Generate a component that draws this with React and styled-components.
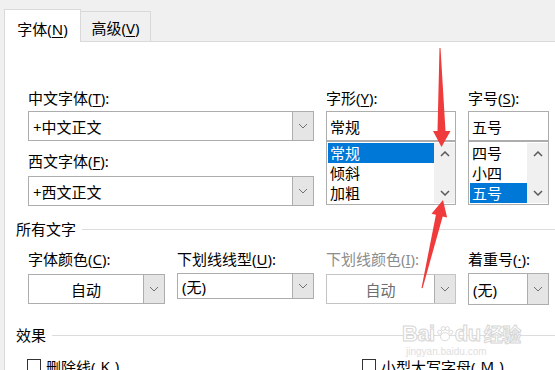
import React from "react";
import styled, { createGlobalStyle } from "styled-components";

const GlobalStyle = createGlobalStyle`
  html, body {
    margin: 0;
    padding: 0;
    background: #f0f0f0;
    overflow: hidden;
  }
  body {
    font-family: "Noto Sans", "Noto Sans CJK SC", sans-serif;
    font-size: 15px;
    color: #000;
  }
  u {
    text-underline-offset: 2px;
  }
`;

function Chevron({ up, thick }) {
  return (
    <svg width="10" height="6" viewBox="0 0 10 6">
      <polyline
        points={up ? "1,5 5,1 9,5" : "1,1 5,5 9,1"}
        fill="none"
        stroke={thick ? "#5a5a5a" : "#707070"}
        strokeWidth={thick ? 1.5 : 1}
      />
    </svg>
  );
}

function Combo({ value, center, disabled, height = 30, offset = 0 }) {
  return (
    <ComboBox $height={height} $offset={offset} $disabled={disabled}>
      <ComboValue $center={center} $disabled={disabled}>
        {value}
      </ComboValue>
      <DropButton>
        <Chevron />
      </DropButton>
    </ComboBox>
  );
}

function ListBox({ items, selected }) {
  return (
    <List>
      <Items>
        {items.map((it) => (
          <Item key={it} $selected={it === selected}>
            {it}
          </Item>
        ))}
      </Items>
      <ScrollBar>
        <ScrollButton>
          <Chevron up thick />
        </ScrollButton>
        <ScrollButton>
          <Chevron thick />
        </ScrollButton>
      </ScrollBar>
    </List>
  );
}

function Arrows() {
  return (
    <ArrowLayer width="555" height="370" viewBox="0 0 555 370">
      <polygon
        fill="#ef3b3b"
        points="439.5,48 440.5,48 445.5,131 450.5,131 441.5,147 433,131 437.5,131"
      />
      <polygon
        fill="#ef3b3b"
        points="421.5,288 422.6,288.2 442.7,216.4 447.1,217.4 443,200 431.5,213.7 435.9,214.8"
      />
    </ArrowLayer>
  );
}

export default function App() {
  return (
    <Page>
      <GlobalStyle />
      <TabBar>
        <Tab $active>
          字体(<u>N</u>)
        </Tab>
        <Tab>
          高级(<u>V</u>)
        </Tab>
      </TabBar>
      <Pane>
        <FontGrid>
          <Column $span={2}>
            <Label>
              中文字体(<u>T</u>):
            </Label>
            <Combo value="+中文正文" />
            <Label $gap>
              西文字体(<u>F</u>):
            </Label>
            <Combo value="+西文正文" />
          </Column>
          <Column>
            <Label>
              字形(<u>Y</u>):
            </Label>
            <TextBox>常规</TextBox>
            <ListBox items={["常规", "倾斜", "加粗"]} selected="常规" />
          </Column>
          <Column>
            <Label>
              字号(<u>S</u>):
            </Label>
            <TextBox>五号</TextBox>
            <ListBox items={["四号", "小四", "五号"]} selected="五号" />
          </Column>
        </FontGrid>

        <SectionHead $top={13}>
          <span>所有文字</span>
          <Rule />
        </SectionHead>

        <ColorGrid>
          <Column>
            <Label $tight>
              字体颜色(<u>C</u>):
            </Label>
            <Combo value="自动" center offset={1} />
          </Column>
          <Column>
            <Label $tight>
              下划线线型(<u>U</u>):
            </Label>
            <Combo value="(无)" height={26} />
          </Column>
          <Column>
            <Label $tight $disabled>
              下划线颜色(<u>I</u>):
            </Label>
            <Combo value="自动" center disabled offset={1} />
          </Column>
          <Column>
            <Label $tight>
              着重号(<u>·</u>):
            </Label>
            <Combo value="(无)" height={32} />
          </Column>
        </ColorGrid>

        <SectionHead $top={20}>
          <span>效果</span>
          <Rule />
        </SectionHead>

        <CheckRow>
          <Check>
            <Box />
            删除线(<u>K</u>)
          </Check>
          <Check>
            <Box />
            小型大写字母(<u>M</u>)
          </Check>
        </CheckRow>

        <Watermark>
          <Logo>
            Bai
            <Paw viewBox="0 0 20 20" width="18" height="18">
              <ellipse cx="10" cy="13" rx="5" ry="4.5" />
              <circle cx="4" cy="8" r="2.2" />
              <circle cx="8" cy="4" r="2.2" />
              <circle cx="12.5" cy="4" r="2.2" />
              <circle cx="16.5" cy="8" r="2.2" />
            </Paw>
            du
            <LogoCn>经验</LogoCn>
          </Logo>
          <Site>jingyan.baidu.com</Site>
        </Watermark>
      </Pane>
      <Arrows />
    </Page>
  );
}

const Page = styled.div`
  position: relative;
  width: 555px;
  height: 370px;
  box-sizing: border-box;
  padding: 9px 0 0 4px;
  display: flex;
  flex-direction: column;
  overflow: hidden;
`;

const TabBar = styled.div`
  display: flex;
  align-items: flex-end;
  height: 32px;
`;

const Tab = styled.div`
  box-sizing: border-box;
  width: ${(p) => (p.$active ? "77px" : "70px")};
  height: ${(p) => (p.$active ? "33px" : "30px")};
  margin-bottom: ${(p) => (p.$active ? "-1px" : "0")};
  background: ${(p) => (p.$active ? "#fff" : "#f0f0f0")};
  border: 1px solid #d9d9d9;
  border-bottom: none;
  border-left: ${(p) => (p.$active ? "1px solid #d9d9d9" : "none")};
  position: relative;
  z-index: 1;
  display: flex;
  align-items: center;
  justify-content: center;
  padding-top: ${(p) => (p.$active ? "5px" : "2px")};
  line-height: 20px;
`;

const Pane = styled.div`
  position: relative;
  flex: 1;
  background: #fff;
  border-top: 1px solid #d9d9d9;
  border-left: 1px solid #d9d9d9;
  padding: 46px 0 0 11px;
`;

const FontGrid = styled.div`
  display: grid;
  grid-template-columns: 137px 137px 130px 81px;
  column-gap: 12px;
  margin-left: 12px;
  align-items: start;
`;

const ColorGrid = styled(FontGrid)`
  margin-top: 10px;
`;

const Column = styled.div`
  display: flex;
  flex-direction: column;
  grid-column: span ${(p) => p.$span || 1};
`;

const Label = styled.div`
  height: 20px;
  line-height: 20px;
  white-space: nowrap;
  margin-top: ${(p) => (p.$gap ? "10px" : "0")};
  margin-bottom: ${(p) => (p.$gap ? "5px" : p.$tight ? "4px" : "3px")};
  color: ${(p) => (p.$disabled ? "#8c8c8c" : "#000")};
`;

const ComboBox = styled.div`
  box-sizing: border-box;
  display: flex;
  height: ${(p) => p.$height}px;
  margin-top: ${(p) => p.$offset}px;
  border: 1px solid ${(p) => (p.$disabled ? "#c4c4c4" : "#adadad")};
  background: #fff;
`;

const ComboValue = styled.div`
  flex: 1;
  display: flex;
  align-items: center;
  justify-content: ${(p) => (p.$center ? "center" : "flex-start")};
  padding-left: ${(p) => (p.$center ? "0" : "4px")};
  color: ${(p) => (p.$disabled ? "#6d6d6d" : "#000")};
  white-space: nowrap;
`;

const DropButton = styled.div`
  width: 20px;
  border-left: 1px solid #adadad;
  background: #e5e5e5;
  display: flex;
  align-items: center;
  justify-content: center;
`;

const TextBox = styled.div`
  box-sizing: border-box;
  height: 30px;
  border: 1px solid #adadad;
  padding-left: 3px;
  display: flex;
  align-items: center;
`;

const List = styled.div`
  box-sizing: border-box;
  height: 64px;
  border: 1px solid #adadad;
  padding: 1px 0 1px 1px;
  display: flex;
`;

const Items = styled.div`
  flex: 1;
  display: flex;
  flex-direction: column;
`;

const Item = styled.div`
  height: 20px;
  line-height: 20px;
  padding-left: 2px;
  background: ${(p) => (p.$selected ? "#0078d7" : "transparent")};
  color: ${(p) => (p.$selected ? "#fff" : "#000")};
`;

const ScrollBar = styled.div`
  width: 21px;
  background: #f0f0f0;
  display: flex;
  flex-direction: column;
  justify-content: space-between;
`;

const ScrollButton = styled.div`
  height: 21px;
  display: flex;
  align-items: center;
  justify-content: center;
`;

const SectionHead = styled.div`
  display: flex;
  align-items: center;
  gap: 6px;
  height: 20px;
  line-height: 20px;
  margin-top: ${(p) => p.$top}px;
`;

const Rule = styled.div`
  flex: 1;
  height: 1px;
  background: #dcdcdc;
`;

const CheckRow = styled.div`
  display: grid;
  grid-template-columns: 335px auto;
  margin: 14px 0 0 11px;
`;

const Check = styled.div`
  display: flex;
  align-items: center;
  gap: 5px;
  height: 14px;
  white-space: nowrap;
`;

const Box = styled.span`
  box-sizing: border-box;
  width: 14px;
  height: 14px;
  border: 1px solid #333;
  background: #fff;
`;

const Watermark = styled.div`
  position: absolute;
  left: 397px;
  top: 280px;
  display: flex;
  flex-direction: column;
  pointer-events: none;
`;

const Logo = styled.div`
  display: flex;
  align-items: center;
  font-family: "Liberation Sans", sans-serif;
  font-weight: bold;
  font-size: 22px;
  line-height: 24px;
  color: #fff;
  -webkit-text-stroke: 1px #d6d6d6;
  letter-spacing: -0.5px;
`;

const LogoCn = styled.span`
  font-family: "Noto Sans CJK SC", sans-serif;
  font-size: 19px;
  margin-left: 3px;
`;

const Paw = styled.svg`
  fill: #fff;
  stroke: #d6d6d6;
  stroke-width: 1;
  margin: 0 1px;
`;

const Site = styled.div`
  font-family: "Liberation Sans", sans-serif;
  font-size: 10px;
  line-height: 11px;
  color: #dedede;
  margin-left: 4px;
`;

const ArrowLayer = styled.svg`
  position: absolute;
  left: 0;
  top: 0;
  pointer-events: none;
`;
